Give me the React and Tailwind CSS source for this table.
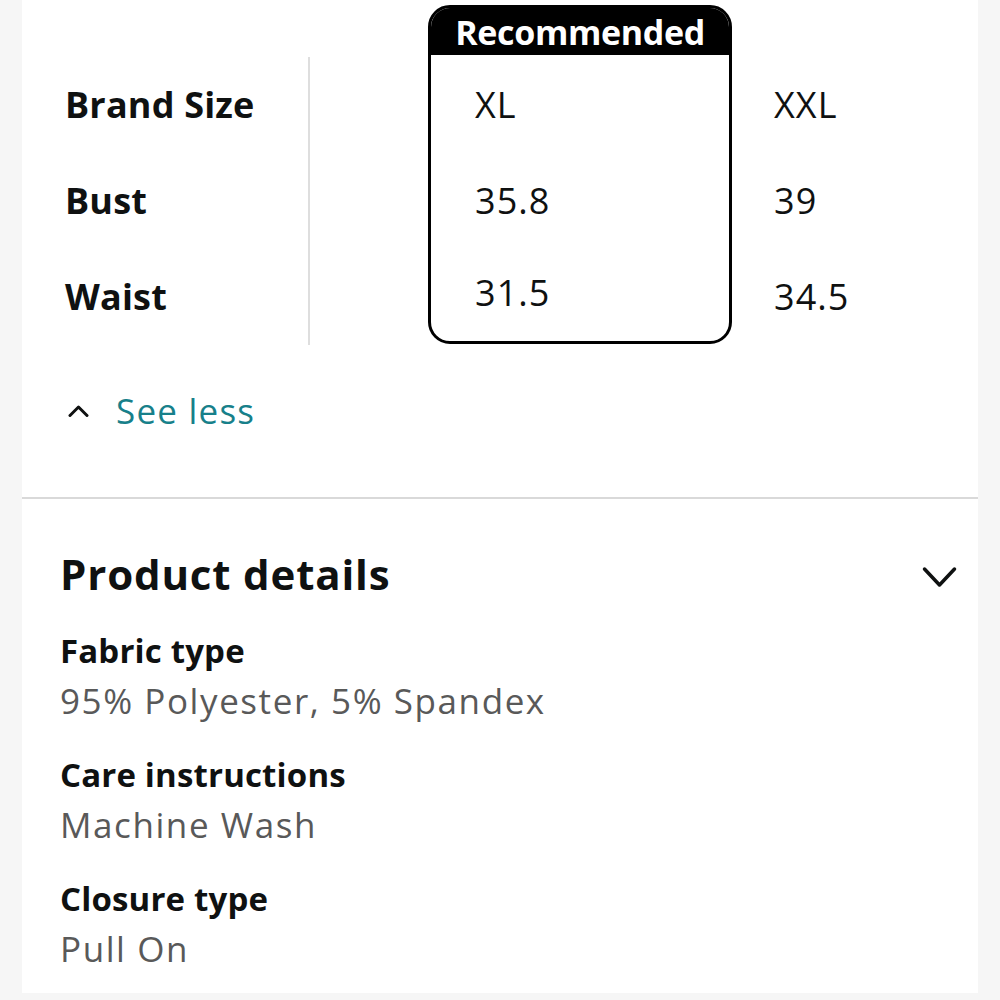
import React from "react";

const sizeRows = [
  { label: "Brand Size", rec: "XL", next: "XXL" },
  { label: "Bust", rec: "35.8", next: "39" },
  { label: "Waist", rec: "31.5", next: "34.5" },
];

const details = [
  { name: "Fabric type", value: "95% Polyester, 5% Spandex" },
  { name: "Care instructions", value: "Machine Wash" },
  { name: "Closure type", value: "Pull On" },
];

const font = { fontFamily: '"Open Sans", "Noto Sans", sans-serif' };

const ChevronUp = () => (
  <svg width="21" height="12" viewBox="0 0 21 12" fill="none">
    <path d="M2 10.5 L10.5 2 L19 10.5" stroke="#0f1111" strokeWidth="3" strokeLinecap="round" strokeLinejoin="round" />
  </svg>
);

const ChevronDown = () => (
  <svg width="35" height="22" viewBox="0 0 35 22" fill="none">
    <path d="M2.5 3 L17.5 19 L32.5 3" stroke="#0f1111" strokeWidth="3.5" strokeLinecap="round" strokeLinejoin="round" />
  </svg>
);

export default function App() {
  return (
    <div className="w-full h-[1000px] bg-[#f6f6f6] px-[22px] pb-[7px] text-[#0f1111]" style={font}>
      <div className="h-full bg-white">
        {/* Size chart */}
        <div className="h-[499px] border-b-2 border-[#d9d9d9] pt-[5px]">
          <div className="flex items-start pl-[43px]">
            <div className="mt-[52px] w-[245px] border-r-2 border-[#dedede] flex flex-col">
              {sizeRows.map((r) => (
                <div key={r.label} className="h-[96px] flex items-center text-[36px] font-bold leading-[44px] tracking-[0.005em]">
                  {r.label}
                </div>
              ))}
            </div>

            <div className="ml-[118px] w-[304px] border-[3px] border-black rounded-[22px] overflow-hidden">
              <div className="h-[47px] bg-black flex items-center justify-center text-white text-[34px] font-bold leading-[40px] tracking-[-0.01em]">
                Recommended
              </div>
              <div className="pt-[2px] pl-[44px]">
                <div className="h-[96px] flex items-center text-[36px] leading-[44px] tracking-[0.03em]">XL</div>
                <div className="h-[96px] flex items-center text-[36px] leading-[44px] tracking-[0.03em]">35.8</div>
                <div className="h-[92px] pb-[4px] flex items-center text-[36px] leading-[44px] tracking-[0.03em]">31.5</div>
              </div>
            </div>

            <div className="ml-[42px] mt-[52px] flex flex-col">
              {sizeRows.map((r) => (
                <div key={r.next} className="h-[96px] flex items-center text-[36px] leading-[44px] tracking-[0.03em]">
                  {r.next}
                </div>
              ))}
            </div>
          </div>

          <div className="mt-[44px] pl-[46px] flex items-center h-[44px]">
            <ChevronUp />
            <span className="ml-[27px] text-[35px] leading-[44px] tracking-[0.035em] text-[#17808a]">See less</span>
          </div>
        </div>

        {/* Product details */}
        <div className="pl-[38px] pr-[21px]">
          <div className="mt-[50px] flex items-center justify-between h-[50px]">
            <h2 className="text-[42px] font-bold leading-[50px] tracking-[0.02em]">Product details</h2>
            <div className="mt-[6px]">
              <ChevronDown />
            </div>
          </div>

          {details.map((d) => (
            <div key={d.name} className="mt-[31px] first:mt-[29px]">
              <div className="text-[33px] font-bold leading-[42px] tracking-[0.005em]">{d.name}</div>
              <div className="mt-[7px] text-[35px] leading-[44px] tracking-[0.045em] text-[#595959]">{d.value}</div>
            </div>
          ))}
        </div>
      </div>
    </div>
  );
}
